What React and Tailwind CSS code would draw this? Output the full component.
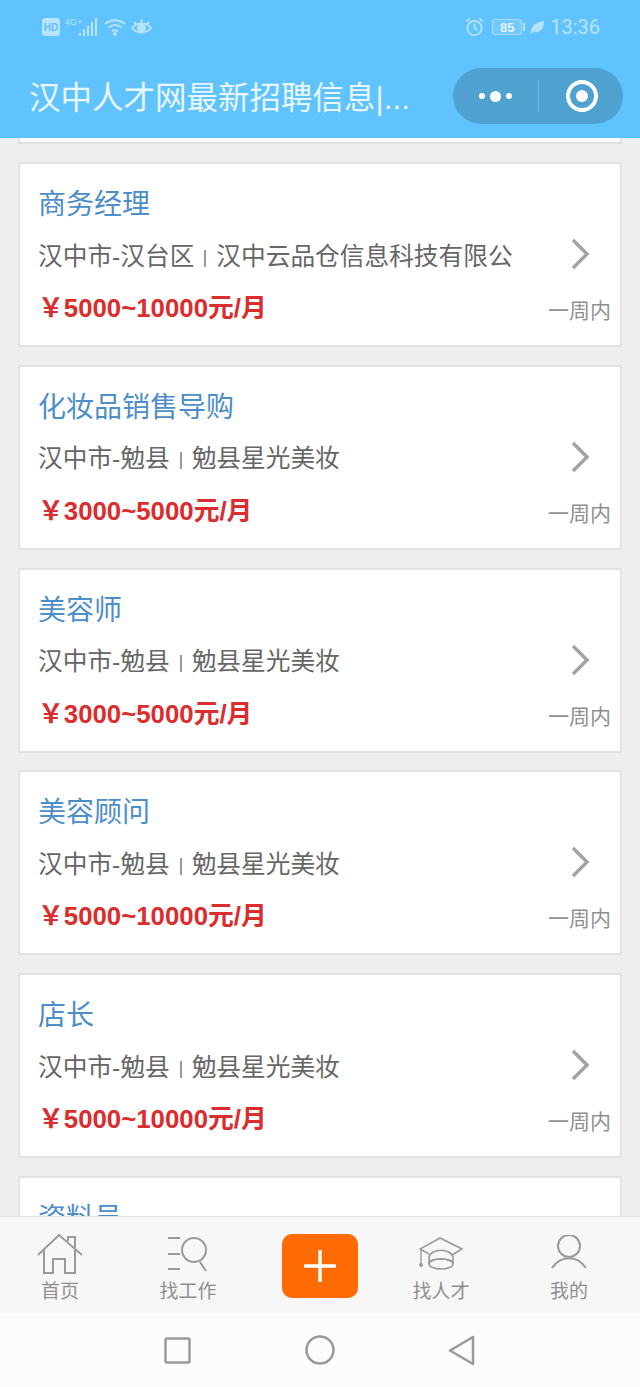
const font = { fontFamily: '"Liberation Sans", "Noto Sans CJK SC", sans-serif' }

const jobs = [
    { title: '商务经理', area: '汉中市-汉台区', company: '汉中云品仓信息科技有限公', salary: '5000~10000元/月' },
    { title: '化妆品销售导购', area: '汉中市-勉县', company: '勉县星光美妆', salary: '3000~5000元/月' },
    { title: '美容师', area: '汉中市-勉县', company: '勉县星光美妆', salary: '3000~5000元/月' },
    { title: '美容顾问', area: '汉中市-勉县', company: '勉县星光美妆', salary: '5000~10000元/月' },
    { title: '店长', area: '汉中市-勉县', company: '勉县星光美妆', salary: '5000~10000元/月' },
]

function StatusLeft() {
    return (
        <div className="flex items-center text-[#b9e4fd]">
            <svg width="18" height="18" viewBox="0 0 18 18">
                <rect width="18" height="18" rx="3" fill="currentColor" />
                <text x="9" y="13" textAnchor="middle" fontSize="10" fontWeight="700" fill="#60c3fd">HD</text>
            </svg>
            <svg width="34" height="20" viewBox="0 0 34 20" className="ml-[5px]" fill="currentColor">
                <text x="0" y="8" fontSize="9">4G+</text>
                <rect x="14" y="16" width="2" height="3" />
                <rect x="18" y="12" width="2" height="7" />
                <rect x="22" y="9" width="2" height="10" />
                <rect x="26" y="5" width="2" height="14" />
                <rect x="30" y="1" width="2" height="18" />
            </svg>
            <svg width="22" height="18" viewBox="0 0 22 18" className="ml-[5px]" fill="none" stroke="currentColor" strokeWidth="2">
                <path d="M1 6c6-5 14-5 20 0" />
                <path d="M4.500 9.500c4-3 9-3 13 0" />
                <path d="M8 13c2-1 4-1 6 0" />
                <circle cx="11" cy="16" r="1" fill="currentColor" />
            </svg>
            <svg width="21" height="18" viewBox="0 0 21 18" className="ml-[5px]" fill="none" stroke="currentColor" strokeWidth="1.800">
                <path d="M1 10c5-6 14-6 19 0-5 6-14 6-19 0z" />
                <circle cx="10.500" cy="10" r="3.500" fill="currentColor" />
                <path d="M3 4l2 2M10.500 1v3M18 4l-2 2" />
            </svg>
        </div>
    )
}

function StatusRight() {
    return (
        <div className="flex items-center text-[#b9e4fd]">
            <svg width="19" height="20" viewBox="0 0 20 20" fill="none" stroke="currentColor" strokeWidth="1.800">
                <circle cx="10" cy="11" r="7.500" />
                <path d="M10 6.500V11l3 2M1.500 4L5 1M18.500 4L15 1" />
            </svg>
            <div className="ml-[8px] flex h-[16px] w-[30px] items-center justify-center rounded-[2px] border border-[#a5dcfd] bg-[#74cafd] text-[13px] font-bold leading-none text-[#e0f4ff]">85</div>
            <div className="ml-[1px] h-[8px] w-[2px] bg-[#b9e4fd]" />
            <svg width="15" height="15" viewBox="0 0 16 16" className="ml-[5px]" fill="currentColor">
                <path d="M1 15C0 7 6 2 15 1c0 8-4 13-11 12l6-7-7 7z" />
            </svg>
            <span className="ml-[5px] text-[20px] leading-none" style={{ fontFamily: 'Roboto, sans-serif' }}>13:36</span>
        </div>
    )
}

function JobCard({ job }) {
    return (
        <div className="flex h-[185px] shrink-0 flex-col border-2 border-[#e2e2e4] bg-white pl-[18px] pr-[9px]">
            <div className="mt-[21px] text-[28px] leading-[40px] text-[#4c8dca]">{job.title}</div>
            <div className="mt-[11px] flex h-[40px] items-center justify-between pr-[21px] text-[24.700px] text-[#666666]">
                <div className="flex items-center whitespace-nowrap">
                    <span>{job.area}</span>
                    <span className="mx-[10px] h-[17px] w-[2px] translate-y-[2px] bg-[#9a9a9a]" />
                    <span>{job.company}</span>
                </div>
                <svg width="20" height="32" viewBox="0 0 20 32" fill="none" stroke="#a3a3a3" strokeWidth="3.500" className="-translate-y-[2px]">
                    <path d="M3 2l14 14L3 30" />
                </svg>
            </div>
            <div className="flex items-start justify-between">
                <div className="mt-[12px] text-[25.800px] font-bold leading-[40px] text-[#db2c2e]">{'\uFFE5'}{job.salary}</div>
                <div className="mt-[19px] text-[21px] leading-[32px] text-[#909090]">一周内</div>
            </div>
        </div>
    )
}

function TabItem({ label, children, className }) {
    return (
        <div className={`flex w-[70px] flex-col items-center ${className}`}>
            <div className="flex h-[40px] items-center justify-center">{children}</div>
            <div className="mt-[5px] whitespace-nowrap text-[19px] leading-[26px] text-[#8f8f8f]">{label}</div>
        </div>
    )
}

export default function App() {
    return (
        <div className="flex h-[1387px] w-[640px] flex-col overflow-hidden bg-[#efeff1]" style={font}>
            <header className="h-[138px] shrink-0 bg-[#60c3fd]">
                <div className="flex h-[54px] items-center justify-between pl-[42px] pr-[40px]">
                    <StatusLeft />
                    <StatusRight />
                </div>
                <div className="mt-[14px] flex items-center justify-between pl-[29px] pr-[17px]">
                    <div className="whitespace-nowrap pt-[4px] text-[31.500px] leading-[52px] text-[#e8f6ff]">汉中人才网最新招聘信息|...</div>
                    <div className="flex h-[56px] w-[170px] items-center rounded-full bg-[#4fa2d0]">
                        <div className="flex w-[85px] items-center justify-center gap-[5px]">
                            <span className="size-[6px] rounded-full bg-white" />
                            <span className="size-[11px] rounded-full bg-white" />
                            <span className="size-[6px] rounded-full bg-white" />
                        </div>
                        <div className="h-[32px] w-px bg-[#78bbe0]" />
                        <div className="flex flex-1 items-center justify-center pl-[2px]">
                            <div className="flex size-[32px] items-center justify-center rounded-full border-[4px] border-white">
                                <span className="size-[12px] rounded-full bg-white" />
                            </div>
                        </div>
                    </div>
                </div>
            </header>

            <main className="flex min-h-0 flex-1 flex-col gap-[17.750px] overflow-hidden px-[18px]">
                <div className="mb-[0.300px] h-[6px] shrink-0 border-x-2 border-b-2 border-[#e2e2e4] bg-white" />
                {jobs.map(job => <JobCard key={job.title} job={job} />)}
                <div className="h-[60px] shrink-0 border-2 border-[#e2e2e4] bg-white pl-[18px] pt-[21px] text-[28px] leading-[40px] text-[#4c8dca]">资料员</div>
            </main>

            <nav className="flex h-[97px] shrink-0 items-start border-t border-[#e4e4e6] bg-[#f7f7f8] pt-[17px]">
                <TabItem label="首页" className="ml-[25px]">
                    <svg width="46" height="42" viewBox="0 0 46 42" fill="none" stroke="#9a9a9a" strokeWidth="2">
                        <path d="M1 22L22 2l23 20" />
                        <path d="M7 17v23h9V26h12v14h10V17" />
                        <path d="M31 8V4h7v11" />
                    </svg>
                </TabItem>
                <TabItem label="找工作" className="ml-[58px]">
                    <svg width="42" height="38" viewBox="0 0 42 38" fill="none" stroke="#9a9a9a" strokeWidth="2">
                        <circle cx="27" cy="15" r="12" />
                        <path d="M33 27l6 9M1 3h12M1 19h12M1 34h12" />
                    </svg>
                </TabItem>
                <div className="ml-[59px] flex h-[64px] w-[76px] shrink-0 items-center justify-center rounded-[10px] bg-[#fe6a04]">
                    <svg width="34" height="34" viewBox="0 0 34 34" stroke="#ffffff" strokeWidth="3.500">
                        <path d="M17 1v32M1 17h32" />
                    </svg>
                </div>
                <TabItem label="找人才" className="ml-[48px]">
                    <svg width="44" height="34" viewBox="0 0 44 34" fill="none" stroke="#9a9a9a" strokeWidth="1.600">
                        <path d="M10 17L1 12 21 1l22 11-10 6" />
                        <path d="M10 27v-7C12 11 32 11 34 20v7" />
                        <ellipse cx="22" cy="27" rx="12" ry="5" />
                        <path d="M10 25c4-4 20-4 24 0" />
                        <path d="M2 12v15" strokeWidth="1.400" />
                        <circle cx="2" cy="28" r="1.200" fill="#9a9a9a" />
                    </svg>
                </TabItem>
                <TabItem label="我的" className="ml-[58px]">
                    <svg width="36" height="38" viewBox="0 0 36 38" fill="none" stroke="#9a9a9a" strokeWidth="2">
                        <circle cx="18" cy="11" r="11" />
                        <path d="M1 33C10 20 26 20 35 33" />
                    </svg>
                </TabItem>
            </nav>

            <div className="flex h-[74px] shrink-0 items-center bg-[#fcfcfd] pl-[164px]">
                <svg width="27" height="27" viewBox="0 0 27 27" fill="none" stroke="#9a9a9a" strokeWidth="2.500">
                    <rect x="1.500" y="1.500" width="24" height="24" rx="1.500" />
                </svg>
                <svg width="30" height="30" viewBox="0 0 30 30" fill="none" stroke="#9a9a9a" strokeWidth="2.500" className="ml-[114px]">
                    <circle cx="15" cy="15" r="13.500" />
                </svg>
                <svg width="27" height="31" viewBox="0 0 27 31" fill="none" stroke="#9a9a9a" strokeWidth="2.500" strokeLinejoin="round" className="ml-[113px]">
                    <path d="M25 2v27L2 15.500z" />
                </svg>
            </div>
        </div>
    )
}
